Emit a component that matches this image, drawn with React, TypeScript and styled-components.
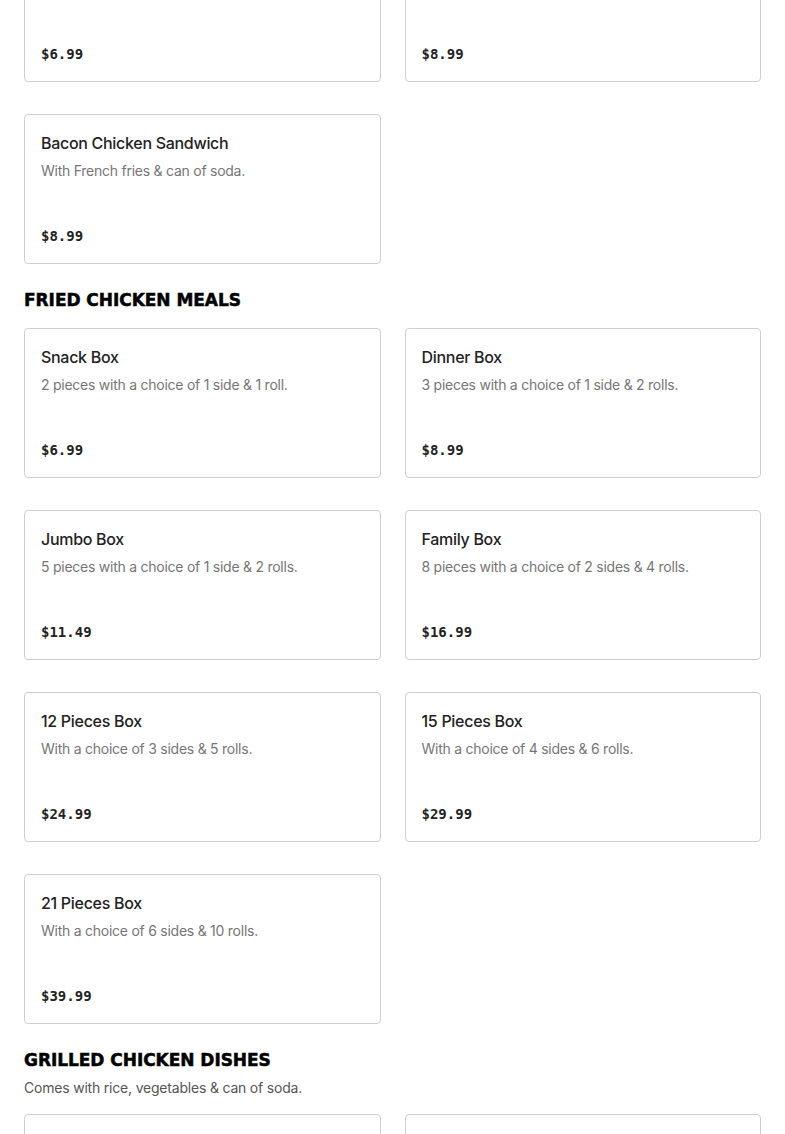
import React from "react";
import styled, { createGlobalStyle } from "styled-components";

const Global = createGlobalStyle`
  html, body { margin: 0; padding: 0; background: #fff; }
  body { font-family: "Inter", "Liberation Sans", sans-serif; color: #222; }
  * { box-sizing: border-box; }
`;

const Page = styled.main`
  padding: 0 24px;
  overflow: hidden;
`;

const Scrolled = styled.div`
  margin-top: -68px;
`;

const Section = styled.section`
  display: flex;
  flex-direction: column;
  margin-bottom: 24px;
`;

const Heading = styled.h2`
  margin: 0;
  font-family: "DejaVu Sans", sans-serif;
  font-weight: 700;
  font-size: 17px;
  line-height: 24px;
  letter-spacing: -0.05px;
  -webkit-text-stroke: 0.5px #000;
  color: #000;
  text-transform: uppercase;
`;

const SectionNote = styled.p`
  margin: 6px 0 0;
  font-size: 14px;
  line-height: 20px;
  letter-spacing: -0.2px;
  color: #555;
`;

const Grid = styled.div<{ $offset?: number }>`
  display: grid;
  grid-template-columns: 1fr 1fr;
  column-gap: 24px;
  row-gap: 32px;
  margin-top: ${(p) => p.$offset ?? 16}px;
`;

const Card = styled.article`
  height: 150px;
  border: 1px solid #cfcfcf;
  border-radius: 4px;
  padding: 16px 16px 17px;
  display: flex;
  flex-direction: column;
  background: #fff;
`;

const Title = styled.h3`
  margin: 0;
  font-size: 16px;
  font-weight: 500;
  line-height: 24px;
  letter-spacing: -0.3px;
  color: #222;
`;

const Desc = styled.p`
  margin: 6px 0 0;
  font-size: 14px;
  line-height: 20px;
  letter-spacing: -0.25px;
  color: #767676;
`;

const Price = styled.span`
  margin-top: auto;
  font-family: "DejaVu Sans Mono", monospace;
  font-weight: 700;
  font-size: 14px;
  line-height: 20px;
  color: #222;
`;

type Item = { name?: string; desc?: string; price: string };

const sandwiches: Item[] = [
  { price: "$6.99" },
  { price: "$8.99" },
  { name: "Bacon Chicken Sandwich", desc: "With French fries & can of soda.", price: "$8.99" },
];

const fried: Item[] = [
  { name: "Snack Box", desc: "2 pieces with a choice of 1 side & 1 roll.", price: "$6.99" },
  { name: "Dinner Box", desc: "3 pieces with a choice of 1 side & 2 rolls.", price: "$8.99" },
  { name: "Jumbo Box", desc: "5 pieces with a choice of 1 side & 2 rolls.", price: "$11.49" },
  { name: "Family Box", desc: "8 pieces with a choice of 2 sides & 4 rolls.", price: "$16.99" },
  { name: "12 Pieces Box", desc: "With a choice of 3 sides & 5 rolls.", price: "$24.99" },
  { name: "15 Pieces Box", desc: "With a choice of 4 sides & 6 rolls.", price: "$29.99" },
  { name: "21 Pieces Box", desc: "With a choice of 6 sides & 10 rolls.", price: "$39.99" },
];

const grilled: Item[] = [{ price: "" }, { price: "" }];

const MenuCard = ({ item }: { item: Item }) => (
  <Card>
    {item.name && <Title>{item.name}</Title>}
    {item.desc && <Desc>{item.desc}</Desc>}
    {item.price && <Price>{item.price}</Price>}
  </Card>
);

export default function App() {
  return (
    <>
      <Global />
      <Page>
        <Scrolled>
          <Section>
            <Grid $offset={0}>
              {sandwiches.map((i, n) => (
                <MenuCard key={n} item={i} />
              ))}
            </Grid>
          </Section>
          <Section>
            <Heading>Fried Chicken Meals</Heading>
            <Grid>
              {fried.map((i, n) => (
                <MenuCard key={n} item={i} />
              ))}
            </Grid>
          </Section>
          <Section>
            <Heading>Grilled Chicken Dishes</Heading>
            <SectionNote>Comes with rice, vegetables &amp; can of soda.</SectionNote>
            <Grid $offset={16}>
              {grilled.map((i, n) => (
                <MenuCard key={n} item={i} />
              ))}
            </Grid>
          </Section>
        </Scrolled>
      </Page>
    </>
  );
}
